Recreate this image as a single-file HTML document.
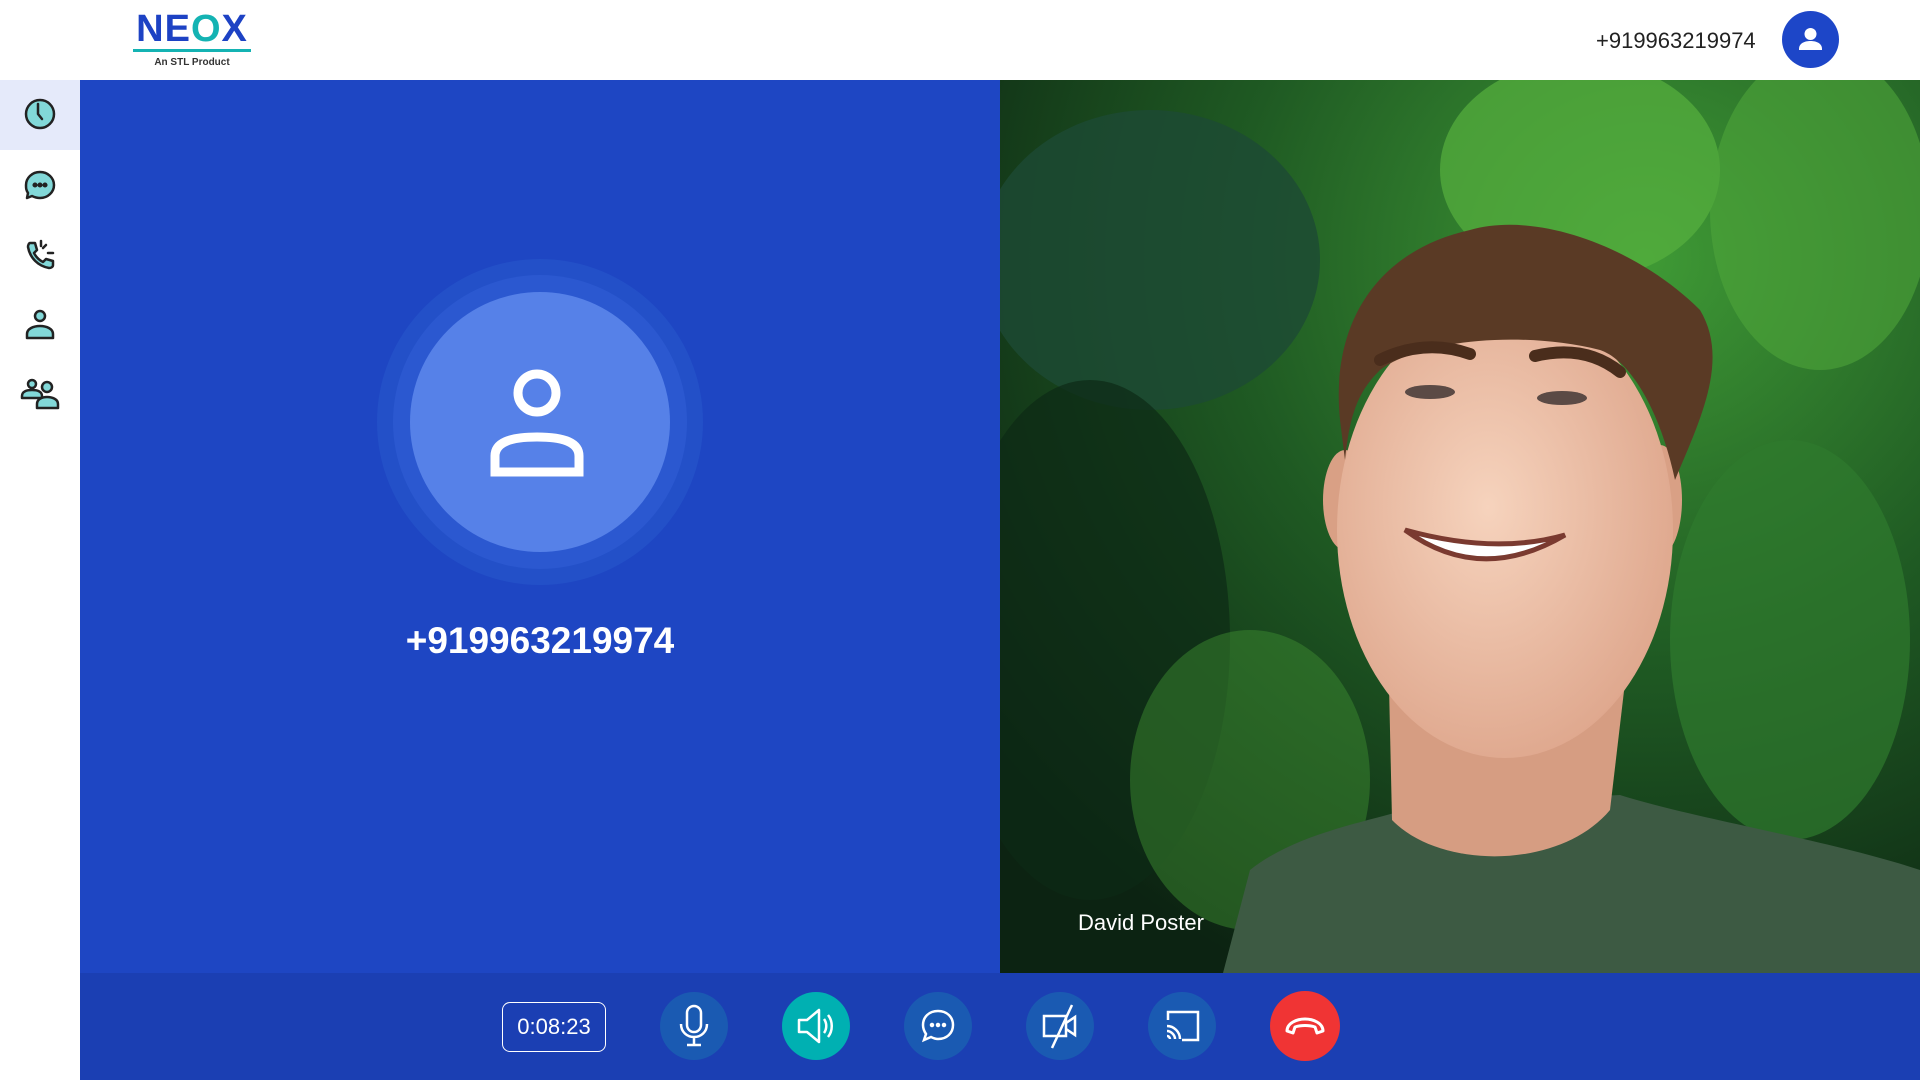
<!DOCTYPE html>
<html><head><meta charset="utf-8"><style>
*{margin:0;padding:0;box-sizing:border-box}
body{width:1920px;height:1080px;overflow:hidden;background:#fff;font-family:"Liberation Sans",sans-serif;position:relative}
.abs{position:absolute}
.ctl{position:absolute;top:992px;width:68px;height:68px;border-radius:50%;background:#1a5ab2;display:flex;align-items:center;justify-content:center}
</style></head><body>
<!-- header -->
<div class="abs" style="left:133px;top:13px;width:118px;">
 <div style="font:900 38px 'Liberation Sans',sans-serif;color:#1d42c4;letter-spacing:1px;line-height:32px;text-align:center">NE<span style="color:#14b3b3">O</span>X</div>
 <div style="height:3px;background:#14b3b3;margin-top:4px"></div>
 <div style="font:bold 10px 'Liberation Sans',sans-serif;color:#333;text-align:center;margin-top:5px">An STL Product</div>
</div>
<div class="abs" style="left:1596px;top:28px;font-size:22px;color:#222">+919963219974</div>
<div class="abs" style="left:1782px;top:11px;width:57px;height:57px;border-radius:50%;background:#1d46c8">
 <svg width="57" height="57" viewBox="0 0 57 57"><circle cx="28.5" cy="23" r="6" fill="#fff"/><path d="M17 38c0-6 6-8 11.5-8s11.5 2 11.5 8v1H17z" fill="#fff"/></svg>
</div>
<!-- sidebar -->
<div class="abs" style="left:0;top:80px;width:80px;height:1000px;background:#fff"></div>
<div class="abs" style="left:0;top:80px;width:80px;height:70px;background:#e5eafa"></div>
<svg class="abs" style="left:0;top:80px" width="80" height="420" viewBox="0 80 80 420" fill="#82d8d8" stroke="#222" stroke-width="2.5" stroke-linecap="round" stroke-linejoin="round">
 <circle cx="40" cy="114" r="14"/><path d="M38 104v10l4 5" fill="none"/>
 <path d="M40 172c8 0 14 6 14 13s-6 13-14 13c-3 0-6-1-8-2l-5 2 1-5c-2-3-2-5-2-8 0-7 6-13 14-13z"/>
 <circle cx="35" cy="185" r="1.3" fill="#222"/><circle cx="40" cy="185" r="1.3" fill="#222"/><circle cx="45" cy="185" r="1.3" fill="#222"/>
 <path d="M30 243l5 0 2 7-3 3c2 4 5 7 9 9l3-3 7 2v4c0 2-2 3-4 3-11-2-19-10-21-21 0-2 1-4 2-4z"/>
 <path d="M41 241v5M46 245l-3 3M48 253h5" fill="none"/>
 <circle cx="40" cy="316" r="5"/><path d="M27 338v-4c0-5 6-8 13-8s13 3 13 8v4z"/>
 <circle cx="32" cy="384" r="4"/><path d="M22 398v-2c0-4 4-6 10-6s10 2 10 6v2z"/>
 <circle cx="47" cy="387" r="5"/><path d="M37 408v-4c0-5 5-7 10-7s11 2 11 7v4z"/>
</svg>
<!-- left blue panel -->
<div class="abs" style="left:80px;top:80px;width:920px;height:893px;background:#1e46c3"></div>
<div class="abs" style="left:377px;top:259px;width:326px;height:326px;border-radius:50%;background:#2350c8"></div>
<div class="abs" style="left:393px;top:275px;width:294px;height:294px;border-radius:50%;background:#2b58d0"></div>
<div class="abs" style="left:410px;top:292px;width:260px;height:260px;border-radius:50%;background:#5681e8"></div>
<svg class="abs" style="left:480px;top:360px" width="120" height="120" viewBox="0 0 120 120" fill="none" stroke="#fff" stroke-width="9">
 <circle cx="57" cy="33" r="19"/><path d="M15 112v-16c0-13 14-19 42-19s42 6 42 19v16z"/>
</svg>
<div class="abs" style="left:340px;top:620px;width:400px;text-align:center;color:#fff;font-weight:bold;font-size:37px">+919963219974</div>
<!-- photo -->
<svg class="abs" style="left:1000px;top:80px" width="920" height="893" viewBox="0 0 920 893">
 <defs>
  <radialGradient id="bg" cx="0.7" cy="0.2" r="0.9"><stop offset="0" stop-color="#3f9a35"/><stop offset="0.5" stop-color="#1f5a23"/><stop offset="1" stop-color="#0c2312"/></radialGradient>
  <radialGradient id="face" cx="0.45" cy="0.45" r="0.6"><stop offset="0" stop-color="#f6d3bd"/><stop offset="1" stop-color="#dea68c"/></radialGradient>
 </defs>
 <rect width="920" height="893" fill="url(#bg)"/>
 <ellipse cx="580" cy="90" rx="140" ry="110" fill="#57b03e" opacity="0.7"/>
 <ellipse cx="820" cy="130" rx="110" ry="160" fill="#4fa53a" opacity="0.6"/>
 <ellipse cx="150" cy="180" rx="170" ry="150" fill="#1d4a35" opacity="0.8"/>
 <ellipse cx="90" cy="560" rx="140" ry="260" fill="#0d2a15" opacity="0.7"/>
 <ellipse cx="250" cy="700" rx="120" ry="150" fill="#3c8a30" opacity="0.5"/>
 <ellipse cx="790" cy="560" rx="120" ry="200" fill="#2f7a2d" opacity="0.7"/>
 <path d="M223 893 L250 790 C300 750 380 740 420 725 L620 715 C700 740 830 760 920 790 L920 893 Z" fill="#3d5a43"/>
 <path d="M388 560 L392 740 C440 790 560 790 610 730 L630 560 Z" fill="#d69d82"/>
 <ellipse cx="345" cy="420" rx="22" ry="50" fill="#d9a085"/>
 <ellipse cx="660" cy="420" rx="22" ry="55" fill="#d9a085"/>
 <ellipse cx="505" cy="450" rx="168" ry="228" fill="url(#face)"/>
 <path d="M340 340 C330 240 380 170 470 150 C540 130 640 170 700 230 C730 280 700 340 675 400 C660 330 630 280 600 270 C520 250 420 260 380 290 C360 310 350 330 345 380 Z" fill="#5a3a25"/>
 <path d="M380 280 q45 -22 90 -6" stroke="#4a2d1c" stroke-width="12" fill="none" stroke-linecap="round"/>
 <path d="M535 276 q50 -12 85 16" stroke="#4a2d1c" stroke-width="12" fill="none" stroke-linecap="round"/>
 <ellipse cx="430" cy="312" rx="25" ry="7" fill="#5b4a45"/>
 <ellipse cx="562" cy="318" rx="25" ry="7" fill="#5b4a45"/>
 <path d="M405 450 q75 55 160 5 q-70 20 -160 -5z" fill="#fff" stroke="#7a3a30" stroke-width="5"/>
 <text x="78" y="850" font-family="Liberation Sans, sans-serif" font-size="22" fill="#fff">David Poster</text>
</svg>
<!-- bottom bar -->
<div class="abs" style="left:80px;top:973px;width:1840px;height:107px;background:#1b3fb3"></div>
<div class="abs" style="left:502px;top:1002px;width:104px;height:50px;border:1.5px solid #fff;border-radius:8px;color:#fff;font-size:22px;display:flex;align-items:center;justify-content:center">0:08:23</div>
<div class="ctl" style="left:660px"><svg width="36" height="44" viewBox="0 0 36 44" fill="none" stroke="#fff" stroke-width="2.5"><rect x="11" y="2" width="14" height="26" rx="7"/><path d="M5 20c0 8 6 13 13 13s13-5 13-13M18 33v8M11 41h14"/></svg></div>
<div class="ctl" style="left:782px;background:#00b0b2"><svg width="44" height="44" viewBox="0 0 44 44" fill="none" stroke="#fff" stroke-width="2.5" stroke-linejoin="round"><path d="M5 16h8l12-10v32L13 28H5z"/><path d="M30 15c3 4 3 10 0 14M34 11c5 6 5 16 0 22"/></svg></div>
<div class="ctl" style="left:904px"><svg width="40" height="40" viewBox="0 0 40 40" fill="none" stroke="#fff" stroke-width="2.5"><path d="M20 5c9 0 15 6 15 14s-6 14-15 14c-3 0-5-1-7-2l-7 3 2-6c-2-3-3-6-3-9 0-8 6-14 15-14z"/><circle cx="14" cy="19" r="1" fill="#fff"/><circle cx="20" cy="19" r="1" fill="#fff"/><circle cx="26" cy="19" r="1" fill="#fff"/></svg></div>
<div class="ctl" style="left:1026px"><svg width="44" height="48" viewBox="0 0 44 48" fill="none" stroke="#fff" stroke-width="2.5"><rect x="6" y="14" width="22" height="20"/><path d="M28 21l9-6v18l-9-6M34 3L14 46"/></svg></div>
<div class="ctl" style="left:1148px"><svg width="44" height="40" viewBox="0 0 44 40" fill="none" stroke="#fff" stroke-width="2.5"><path d="M8 14V6h30v28H22"/><path d="M7 20c7 0 13 6 13 13M7 25c4 0 8 4 8 8M7 30c2 0 3 2 3 3"/></svg></div>
<div class="ctl" style="left:1270px;background:#f03434;width:70px;height:70px;top:991px"><svg width="44" height="30" viewBox="0 0 44 30" fill="none" stroke="#fff" stroke-width="3" stroke-linejoin="round"><path d="M4 20c0-8 10-12 18-12s18 4 18 12l-6 2-2-6c-6-2-14-2-20 0l-2 6z"/></svg></div>
</body></html>
